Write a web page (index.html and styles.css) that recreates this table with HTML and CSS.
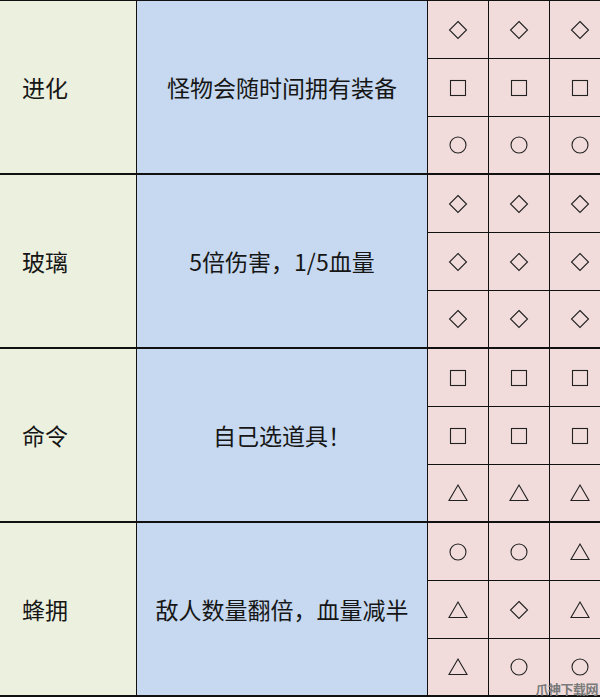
FILE: index.html
```html
<!DOCTYPE html>
<html lang="zh">
<head>
<meta charset="utf-8">
<link rel="stylesheet" href="styles.css">
</head>
<body>
<svg width="0" height="0" class="defs">
  <defs>
    <symbol id="dia" viewBox="0 0 20 20"><path d="M10 1.5 L18.5 10 L10 18.5 L1.5 10 Z" fill="none" stroke="#222" stroke-width="1.1"/></symbol>
    <symbol id="sq" viewBox="0 0 20 20"><rect x="2.5" y="2.5" width="15" height="15" fill="none" stroke="#222" stroke-width="1.1"/></symbol>
    <symbol id="cir" viewBox="0 0 20 20"><circle cx="10" cy="10" r="8" fill="none" stroke="#222" stroke-width="1.1"/></symbol>
    <symbol id="tri" viewBox="0 0 20 20"><path d="M10 2 L19 17.5 L1 17.5 Z" fill="none" stroke="#222" stroke-width="1.1"/></symbol>
  </defs>
</svg>
<div class="table">
  <div class="name r1">进化</div>
  <div class="desc r1">怪物会随时间拥有装备</div>
  <div class="sym"><svg class="ic"><use href="#dia"/></svg></div>
  <div class="sym"><svg class="ic"><use href="#dia"/></svg></div>
  <div class="sym"><svg class="ic"><use href="#dia"/></svg></div>
  <div class="sym"><svg class="ic"><use href="#sq"/></svg></div>
  <div class="sym"><svg class="ic"><use href="#sq"/></svg></div>
  <div class="sym"><svg class="ic"><use href="#sq"/></svg></div>
  <div class="sym gb"><svg class="ic"><use href="#cir"/></svg></div>
  <div class="sym gb"><svg class="ic"><use href="#cir"/></svg></div>
  <div class="sym gb"><svg class="ic"><use href="#cir"/></svg></div>

  <div class="name r2">玻璃</div>
  <div class="desc r2">5倍伤害，1/5血量</div>
  <div class="sym"><svg class="ic"><use href="#dia"/></svg></div>
  <div class="sym"><svg class="ic"><use href="#dia"/></svg></div>
  <div class="sym"><svg class="ic"><use href="#dia"/></svg></div>
  <div class="sym"><svg class="ic"><use href="#dia"/></svg></div>
  <div class="sym"><svg class="ic"><use href="#dia"/></svg></div>
  <div class="sym"><svg class="ic"><use href="#dia"/></svg></div>
  <div class="sym gb"><svg class="ic"><use href="#dia"/></svg></div>
  <div class="sym gb"><svg class="ic"><use href="#dia"/></svg></div>
  <div class="sym gb"><svg class="ic"><use href="#dia"/></svg></div>

  <div class="name r3">命令</div>
  <div class="desc r3">自己选道具！</div>
  <div class="sym"><svg class="ic"><use href="#sq"/></svg></div>
  <div class="sym"><svg class="ic"><use href="#sq"/></svg></div>
  <div class="sym"><svg class="ic"><use href="#sq"/></svg></div>
  <div class="sym"><svg class="ic"><use href="#sq"/></svg></div>
  <div class="sym"><svg class="ic"><use href="#sq"/></svg></div>
  <div class="sym"><svg class="ic"><use href="#sq"/></svg></div>
  <div class="sym gb"><svg class="ic"><use href="#tri"/></svg></div>
  <div class="sym gb"><svg class="ic"><use href="#tri"/></svg></div>
  <div class="sym gb"><svg class="ic"><use href="#tri"/></svg></div>

  <div class="name r4">蜂拥</div>
  <div class="desc r4">敌人数量翻倍，血量减半</div>
  <div class="sym"><svg class="ic"><use href="#cir"/></svg></div>
  <div class="sym"><svg class="ic"><use href="#cir"/></svg></div>
  <div class="sym"><svg class="ic"><use href="#tri"/></svg></div>
  <div class="sym"><svg class="ic"><use href="#tri"/></svg></div>
  <div class="sym"><svg class="ic"><use href="#dia"/></svg></div>
  <div class="sym"><svg class="ic"><use href="#tri"/></svg></div>
  <div class="sym gb"><svg class="ic"><use href="#tri"/></svg></div>
  <div class="sym gb"><svg class="ic"><use href="#cir"/></svg></div>
  <div class="sym gb"><svg class="ic"><use href="#cir"/></svg></div>
</div>
<div class="watermark">爪神下载网</div>
</body>
</html>
```
FILE: styles.css
```css
html, body {
  margin: 0;
  padding: 0;
  width: 600px;
  height: 697px;
  overflow: hidden;
  background: #ffffff;
}
body {
  position: relative;
  font-family: "Noto Sans CJK SC", "Noto Sans", sans-serif;
  color: #161616;
}
.defs {
  position: absolute;
  width: 0;
  height: 0;
}
.table {
  display: grid;
  grid-template-columns: 137px 291px 61px 61px 61px;
  grid-template-rows: repeat(12, 58px);
  width: 611px;
  border-top: 1px solid #111;
}
.table > div {
  box-sizing: border-box;
  border-right: 1px solid #111;
  border-bottom: 1px solid #111;
  display: flex;
  align-items: center;
}
.name {
  grid-column: 1;
  grid-row: span 3;
  background: #ecf0df;
  padding-left: 22px;
  font-size: 23px;
  border-bottom-width: 2px !important;
}
.desc {
  grid-column: 2;
  grid-row: span 3;
  background: #c6d9f0;
  justify-content: center;
  font-size: 23px;
  border-bottom-width: 2px !important;
}
.sym {
  background: #f1dcdb;
  justify-content: center;
}
.sym.gb {
  border-bottom-width: 2px !important;
}
.ic {
  width: 20px;
  height: 20px;
}
.watermark {
  position: absolute;
  right: 2px;
  bottom: 1px;
  font-size: 13px;
  font-weight: bold;
  color: #7a7a7a;
  letter-spacing: -0.5px;
  line-height: 15px;
}
```
